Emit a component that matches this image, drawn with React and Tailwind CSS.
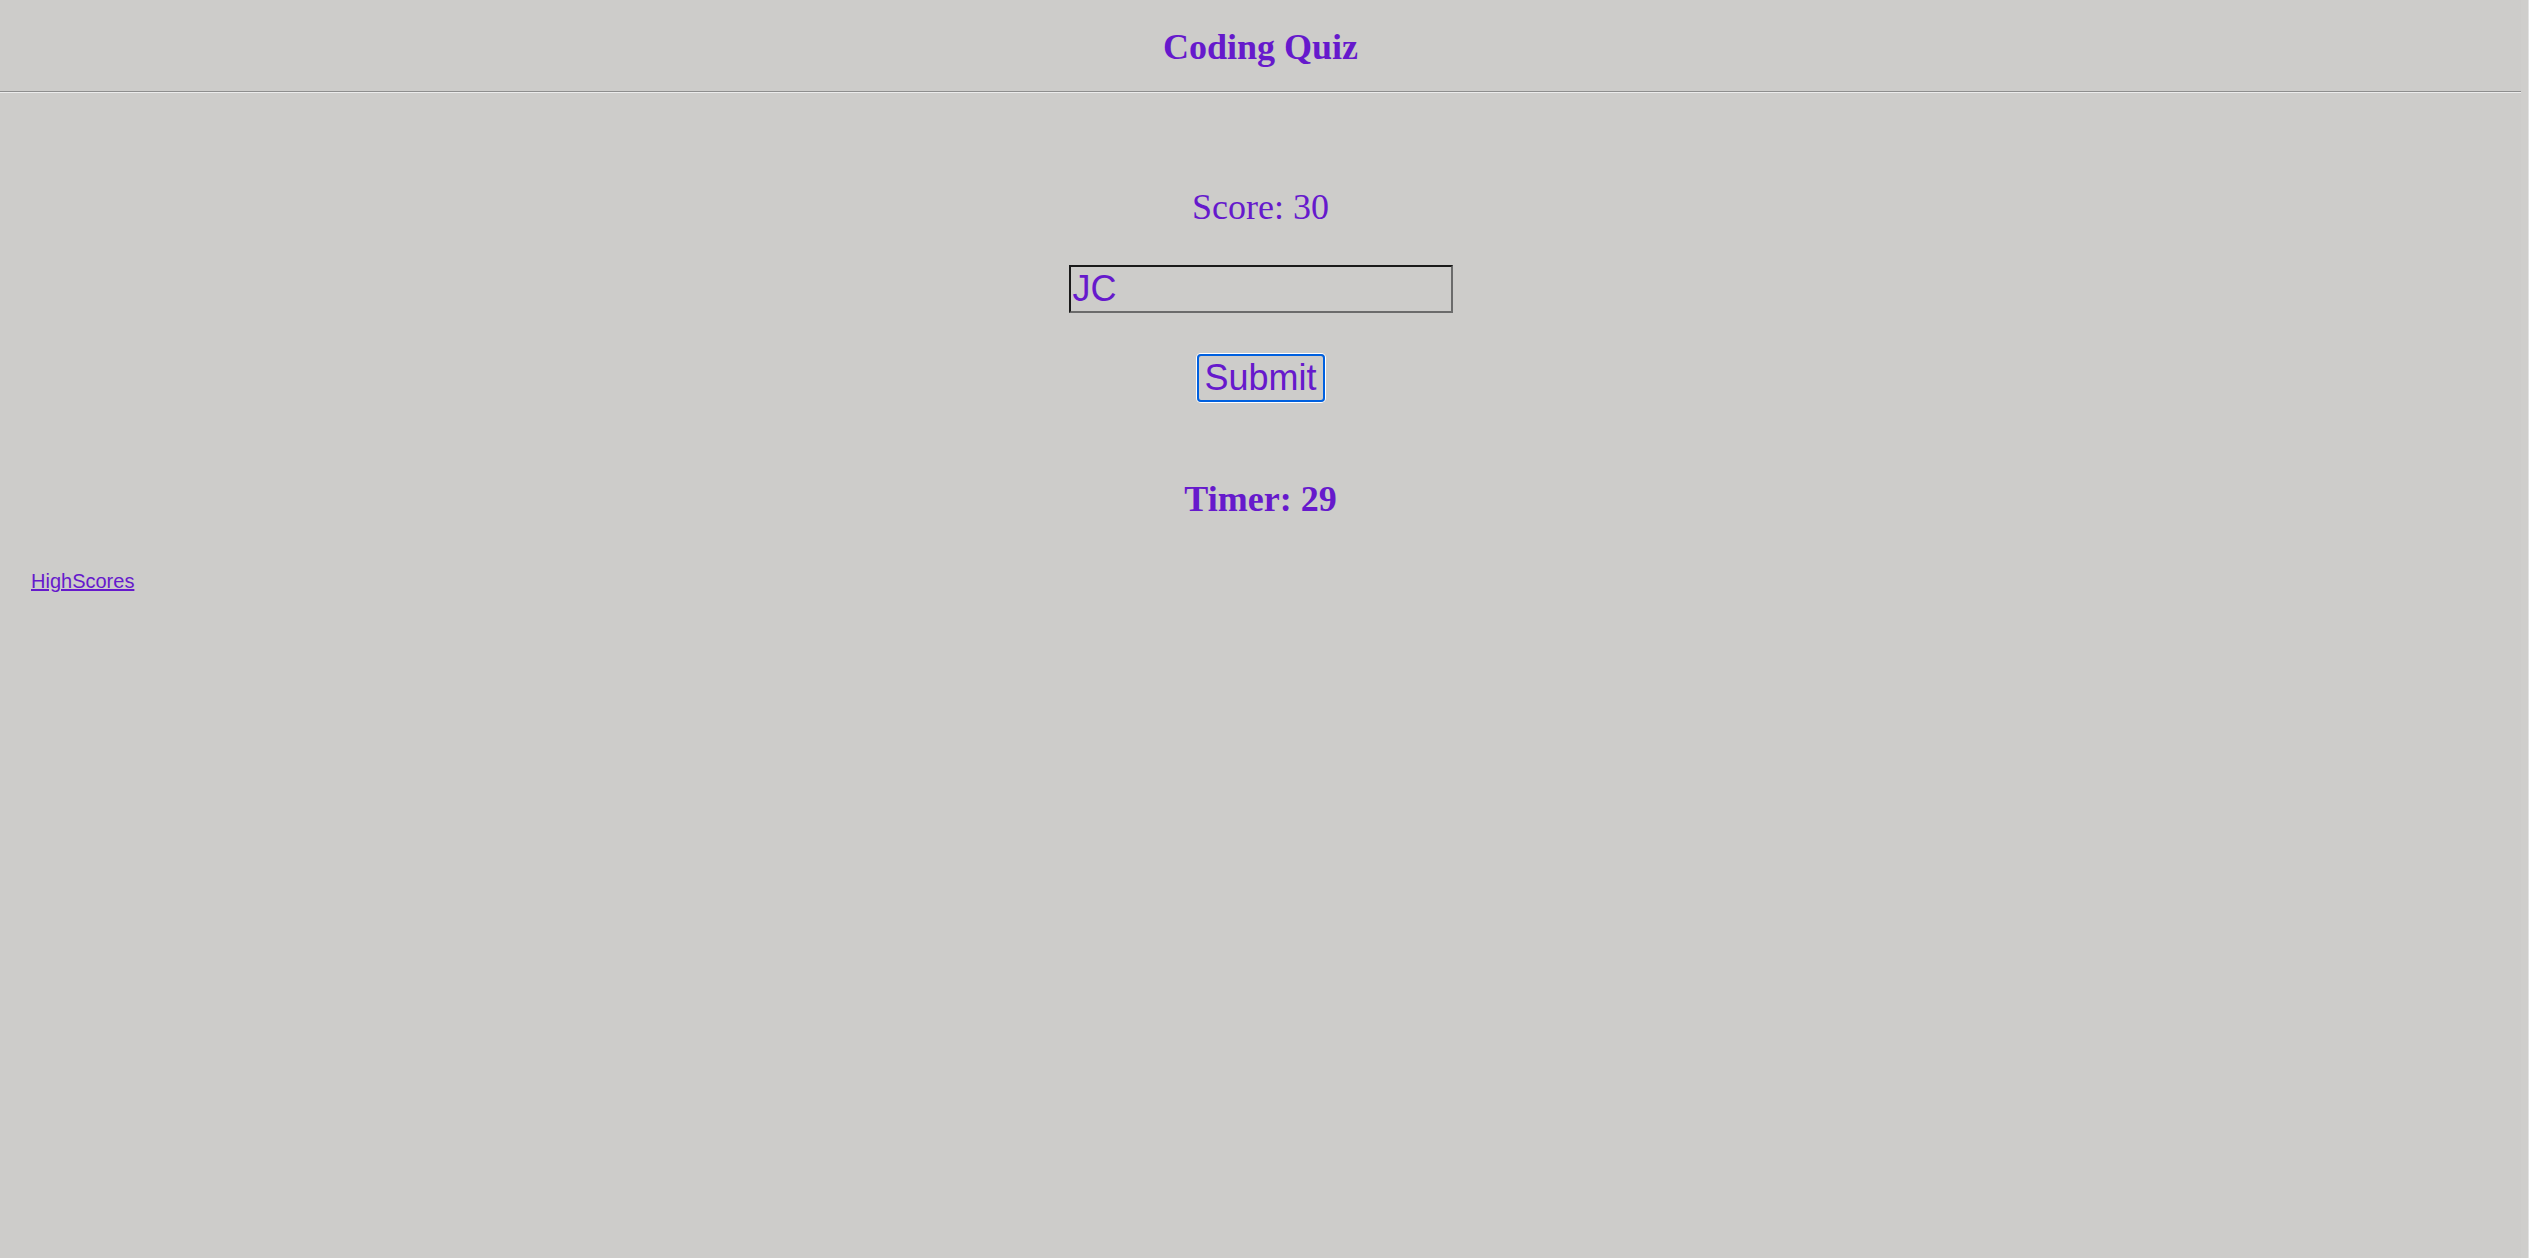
export default function App() {
  return (
    <div className="flex min-h-screen w-full bg-[#cdccca] text-[#6619cc]">
      <div className="flex-1 flex flex-col">
        <header className="h-[91px] pt-[29px] text-center">
          <h1 className="font-['Liberation_Serif',serif] font-bold text-[36px] leading-[36px]">
            Coding Quiz
          </h1>
        </header>
        <hr className="border-0 border-t border-t-[#8e8e8e] border-b border-b-[#ececec]" />

        <main className="flex flex-col items-center">
          <p className="mt-[96px] font-['Liberation_Serif',serif] text-[36px] leading-[36px]">
            Score: 30
          </p>
          <input
            type="text"
            defaultValue="JC"
            className="mt-[40px] w-[384px] h-[48px] border-2 border-t-[#1a1a1a] border-l-[#1a1a1a] border-b-[#6b6b6b] border-r-[#6b6b6b] bg-transparent pl-[2px] font-['Liberation_Sans',sans-serif] text-[36px] text-[#6619cc] outline-none"
          />
          <button className="mt-[41px] w-[128px] h-[48px] rounded-[4px] border-2 border-[#0060df] shadow-[0_0_0_1px_#ffffff] bg-transparent font-['Liberation_Sans',sans-serif] text-[36px] leading-[40px] text-[#6619cc]">
            Submit
          </button>
          <h2 className="mt-[79px] font-['Liberation_Serif',serif] font-bold text-[36px] leading-[36px]">
            Timer: 29
          </h2>
        </main>

        <div className="mt-[53px] pl-[31px]">
          <a
            href="#"
            className="font-['Liberation_Sans',sans-serif] text-[20px] leading-[20px] underline text-[#6619cc]"
          >
            HighScores
          </a>
        </div>
      </div>
      <div className="w-[8px] border-r border-r-[#e2e2e2] bg-[#cfcecc]" />
    </div>
  );
}
